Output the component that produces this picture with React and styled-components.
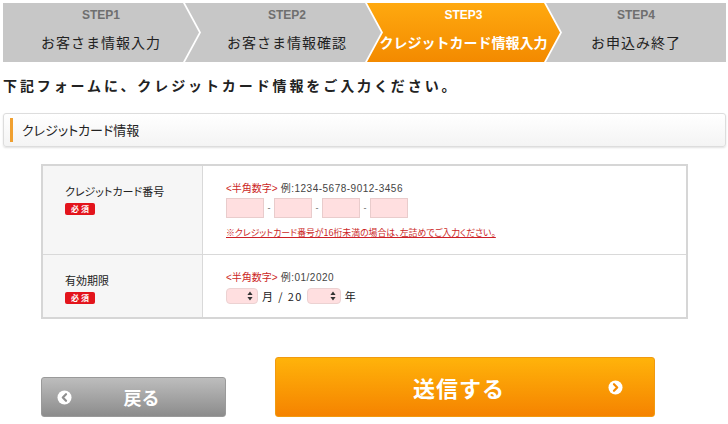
import React from "react";
import styled, { createGlobalStyle } from "styled-components";

const GlobalStyle = createGlobalStyle`
  html, body {
    margin: 0;
    padding: 0;
    background: #ffffff;
  }
  body {
    font-family: "Liberation Sans", "Noto Sans CJK JP", sans-serif;
    color: #222222;
  }
`;

const Page = styled.div`
  width: 728px;
  padding: 3px 2px 0 3px;
  box-sizing: border-box;
`;

const StepBar = styled.div`
  display: flex;
  height: 59px;
`;

const Step = styled.div`
  width: ${(props) => (props.$width ? `${props.$width}px` : "auto")};
  flex: ${(props) => (props.$width ? "0 0 auto" : "1")};
  margin-left: ${(props) => (props.$notch ? "-14px" : "0")};
  background: ${(props) =>
    props.$active
      ? "linear-gradient(#ffa90f, #f38a00)"
      : "#c7c7c7"};
  clip-path: ${(props) =>
    props.$notch && props.$point
      ? "polygon(0 0, calc(100% - 16px) 0, 100% 50%, calc(100% - 16px) 100%, 0 100%, 16px 50%)"
      : props.$point
      ? "polygon(0 0, calc(100% - 16px) 0, 100% 50%, calc(100% - 16px) 100%, 0 100%)"
      : "polygon(0 0, 100% 0, 100% 100%, 0 100%, 16px 50%)"};
  display: flex;
  flex-direction: column;
  align-items: center;
  padding-top: 5px;
  padding-left: ${(props) => (props.$shift ? `${props.$shift}px` : "0")};
  box-sizing: border-box;
`;

const StepNo = styled.div`
  font-family: "Liberation Sans", sans-serif;
  font-weight: bold;
  font-size: 12px;
  line-height: 14px;
  color: ${(props) => (props.$active ? "#ffffff" : "#6f6f6f")};
`;

const StepName = styled.div`
  margin-top: 10px;
  font-family: "Noto Sans CJK JP", sans-serif;
  font-size: 14px;
  font-weight: ${(props) => (props.$active ? "bold" : "normal")};
  letter-spacing: ${(props) => (props.$active ? "0" : "1px")};
  line-height: 20px;
  color: ${(props) => (props.$active ? "#ffffff" : "#222222")};
  white-space: nowrap;
`;

const Lead = styled.p`
  margin: 13px 0 0;
  font-family: "Noto Sans CJK JP", sans-serif;
  font-size: 14px;
  font-weight: bold;
  line-height: 20px;
  letter-spacing: 2.9px;
  color: #222222;
`;

const SectionHead = styled.div`
  margin-top: 18px;
  height: 34px;
  box-sizing: border-box;
  border: 1px solid #dddddd;
  border-radius: 3px;
  background: linear-gradient(#ffffff, #f4f4f4);
  box-shadow: 0 1px 2px rgba(0, 0, 0, 0.12);
  display: flex;
  align-items: center;
  padding-left: 6px;
`;

const SectionBar = styled.span`
  width: 3px;
  height: 24px;
  background: #f0a030;
  margin-right: 9px;
`;

const SectionTitle = styled.span`
  font-family: "Noto Sans CJK JP", sans-serif;
  font-feature-settings: "palt";
  font-size: 13px;
  line-height: 18px;
  color: #222222;
`;

const FormTable = styled.div`
  margin: 17px 0 0 38px;
  width: 647px;
  border: 2px solid #d6d6d6;
  box-sizing: border-box;
  display: grid;
  grid-template-columns: 160px 1fr;
`;

const LabelCell = styled.div`
  background: #f6f6f6;
  border-right: 1px solid #d9d9d9;
  border-top: ${(props) => (props.$first ? "none" : "1px solid #d9d9d9")};
  height: ${(props) => props.$height}px;
  box-sizing: border-box;
  padding: 18px 0 0 22px;
`;

const FieldCell = styled.div`
  border-top: ${(props) => (props.$first ? "none" : "1px solid #d9d9d9")};
  height: ${(props) => props.$height}px;
  box-sizing: border-box;
  padding: 16px 0 0 23px;
`;

const LabelText = styled.div`
  font-family: "Noto Sans CJK JP", sans-serif;
  font-feature-settings: "palt";
  font-size: 11px;
  line-height: 14px;
  color: #222222;
`;

const Required = styled.span`
  display: inline-flex;
  align-items: center;
  justify-content: center;
  margin-top: 3px;
  width: 30px;
  height: 12px;
  border-radius: 2px;
  background: #e3141c;
  color: #ffffff;
  font-family: "Noto Sans CJK JP", sans-serif;
  font-weight: bold;
  font-size: 8px;
  letter-spacing: 2px;
  padding-left: 2px;
  box-sizing: border-box;
`;

const Hint = styled.div`
  font-size: 10px;
  line-height: 14px;
  letter-spacing: 0.5px;
  color: #444444;
  white-space: nowrap;
`;

const HintTag = styled.span`
  color: #cc1f26;
  letter-spacing: 0;
  margin-right: 3px;
`;

const CardRow = styled.div`
  margin-top: 2px;
  display: flex;
  align-items: center;
`;

const CardInput = styled.input`
  width: 38px;
  height: 20px;
  box-sizing: border-box;
  border: 1px solid #e9cccc;
  background: #ffdfe0;
  padding: 0;
  outline: none;
`;

const Dash = styled.span`
  width: 10px;
  text-align: center;
  font-size: 9px;
  color: #666666;
`;

const Note = styled.div`
  margin-top: 9px;
  font-family: "Noto Sans CJK JP", sans-serif;
  font-feature-settings: "palt";
  font-size: 8.9px;
  line-height: 12px;
  color: #cc1f26;
  text-decoration: underline;
  white-space: nowrap;
`;

const DateRow = styled.div`
  margin-top: 3px;
  display: flex;
  align-items: center;
  font-family: "Noto Sans CJK JP", sans-serif;
  font-size: 11px;
  color: #222222;
`;

const SelectBox = styled.div`
  width: ${(props) => props.$width}px;
  height: 16px;
  box-sizing: border-box;
  border-radius: 4px;
  border: 1px solid #ecd2d2;
  background: #ffdfe0;
  display: flex;
  align-items: center;
  justify-content: flex-end;
  padding-right: 4px;
`;

const DateText = styled.span`
  margin: 0 ${(props) => props.$gap || 4}px;
  letter-spacing: 1.4px;
  white-space: pre;
`;

const ButtonRow = styled.div`
  margin: 38px 0 0 38px;
  display: flex;
  align-items: flex-end;
  gap: 49px;
`;

const BackButton = styled.button`
  width: 185px;
  height: 40px;
  border: 1px solid #9a9a9a;
  border-radius: 3px;
  background: linear-gradient(#bdbdbd, #8c8c8c);
  display: flex;
  align-items: center;
  padding: 0 0 0 15px;
  box-sizing: border-box;
  cursor: pointer;
`;

const BackLabel = styled.span`
  flex: 1;
  text-align: center;
  padding-right: 14px;
  font-family: "Noto Sans CJK JP", sans-serif;
  font-size: 18px;
  font-weight: bold;
  color: #ffffff;
`;

const SubmitButton = styled.button`
  width: 380px;
  height: 60px;
  border: 1px solid #f19a10;
  border-radius: 3px;
  background: linear-gradient(#ffb30a, #f58300);
  display: flex;
  align-items: center;
  padding: 0 31px 0 0;
  box-sizing: border-box;
  cursor: pointer;
`;

const SubmitLabel = styled.span`
  flex: 1;
  text-align: center;
  padding-left: 34px;
  font-family: "Noto Sans CJK JP", sans-serif;
  font-size: 22px;
  font-weight: bold;
  letter-spacing: 1px;
  color: #ffffff;
`;

const CircleIcon = ({ dir, color }) => (
  <svg width="15" height="15" viewBox="0 0 16 16">
    <circle cx="8" cy="8" r="7.5" fill="#ffffff" />
    <path
      d={dir === "left" ? "M9.6 4.6 L6.2 8 L9.6 11.4" : "M6.4 4.6 L9.8 8 L6.4 11.4"}
      fill="none"
      stroke={color}
      strokeWidth="2.4"
      strokeLinecap="round"
      strokeLinejoin="round"
    />
  </svg>
);

const SelectArrows = () => (
  <svg width="6" height="10" viewBox="0 0 6 10">
    <path d="M3 0.5 L5.6 4 H0.4 Z M3 9.5 L5.6 6 H0.4 Z" fill="#333333" />
  </svg>
);

const steps = [
  { no: "STEP1", name: "お客さま情報入力", width: 196 },
  { no: "STEP2", name: "お客さま情報確認", width: 196, shift: 8 },
  { no: "STEP3", name: "クレジットカード情報入力", width: 193, active: true },
  { no: "STEP4", name: "お申込み終了" },
];

const App = () => {
  return (
    <>
      <GlobalStyle />
      <Page>
        <StepBar>
          {steps.map((s, i) => (
            <Step
              key={s.no}
              $width={s.width}
              $active={s.active}
              $notch={i > 0}
              $point={i < steps.length - 1}
              $shift={s.shift}
            >
              <StepNo $active={s.active}>{s.no}</StepNo>
              <StepName $active={s.active}>{s.name}</StepName>
            </Step>
          ))}
        </StepBar>

        <Lead>下記フォームに、クレジットカード情報をご入力ください。</Lead>

        <SectionHead>
          <SectionBar />
          <SectionTitle>クレジットカード情報</SectionTitle>
        </SectionHead>

        <FormTable>
          <LabelCell $first $height={88}>
            <LabelText>クレジットカード番号</LabelText>
            <Required>必須</Required>
          </LabelCell>
          <FieldCell $first $height={88}>
            <Hint>
              <HintTag>&lt;半角数字&gt;</HintTag>例:1234-5678-9012-3456
            </Hint>
            <CardRow>
              <CardInput />
              <Dash>-</Dash>
              <CardInput />
              <Dash>-</Dash>
              <CardInput />
              <Dash>-</Dash>
              <CardInput />
            </CardRow>
            <Note>※クレジットカード番号が16桁未満の場合は、左詰めでご入力ください。</Note>
          </FieldCell>

          <LabelCell $height={63}>
            <LabelText>有効期限</LabelText>
            <Required>必須</Required>
          </LabelCell>
          <FieldCell $height={63}>
            <Hint>
              <HintTag>&lt;半角数字&gt;</HintTag>例:01/2020
            </Hint>
            <DateRow>
              <SelectBox $width={32}>
                <SelectArrows />
              </SelectBox>
              <DateText $gap={4}>月 / 20</DateText>
              <SelectBox $width={34}>
                <SelectArrows />
              </SelectBox>
              <DateText $gap={4}>年</DateText>
            </DateRow>
          </FieldCell>
        </FormTable>

        <ButtonRow>
          <BackButton type="button">
            <CircleIcon dir="left" color="#8f8f8f" />
            <BackLabel>戻る</BackLabel>
          </BackButton>
          <SubmitButton type="submit">
            <SubmitLabel>送信する</SubmitLabel>
            <CircleIcon dir="right" color="#f58a00" />
          </SubmitButton>
        </ButtonRow>
      </Page>
    </>
  );
};

export default App;
